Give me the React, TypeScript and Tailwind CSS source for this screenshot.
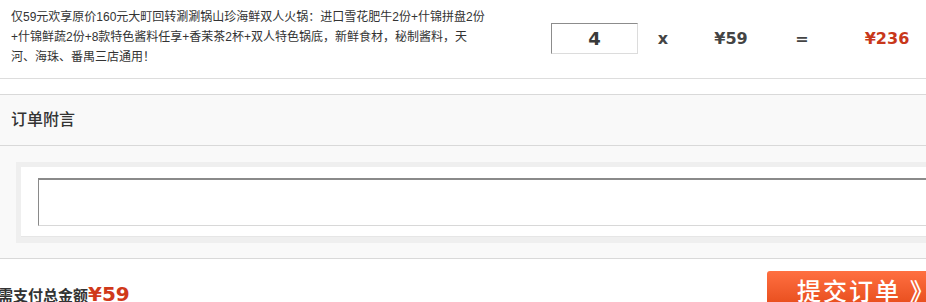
import React from 'react';

const cjk = "font-['Liberation_Sans','Noto_Sans_CJK_SC',sans-serif]";
const num = "font-['DejaVu_Sans','Noto_Sans_CJK_SC',sans-serif]";

const OrderConfirm: React.FC = () => {
  const title =
    '仅59元欢享原价160元大町回转涮涮锅山珍海鲜双人火锅：进口雪花肥牛2份+什锦拼盘2份+什锦鲜蔬2份+8款特色酱料任享+香茉茶2杯+双人特色锅底，新鲜食材，秘制酱料，天河、海珠、番禺三店通用！';

  return (
    <div className={`h-[302px] w-[926px] overflow-hidden bg-white text-[#333] ${cjk}`}>
      <div className="w-[960px]">
        {/* deal row */}
        <div className="flex h-[79px] items-start border-b border-[#dddddd]">
          <p className="ml-[11px] mt-[7px] w-[480px] text-[12px] leading-[20px] text-[#333]">{title}</p>
          <div className={`mt-[23px] flex items-center text-[16px] font-bold text-[#444] ${num}`}>
            <div className="ml-[60px] flex h-[31px] w-[87px] items-center justify-center border border-[#dcdcdc] border-l-[#8c8c8c] border-t-[#8c8c8c] text-[18px] text-[#3a3a3a]">
              4
            </div>
            <div className="w-[50px] text-center">x</div>
            <div className="w-[86px] text-center">¥59</div>
            <div className="w-[56px] text-center">=</div>
            <div className="w-[114px] text-center text-[#c8371a]">¥236</div>
          </div>
        </div>

        {/* note section */}
        <div className="mt-[15px] border-t border-[#d9d9d9] bg-[#f9f9f9]">
          <div className="flex h-[51px] items-center border-b border-[#d9d9d9] pl-[11px] text-[16px] font-medium text-[#333]">
            订单附言
          </div>
          <div className="border-b border-[#d9d9d9] pb-[15px] pl-[16px] pt-[16px]">
            <div className="bg-[#efefef] pb-[6px] pl-[5px] pt-[5px]">
              <div className="border-b border-[#e6e6e6] bg-white pb-[10px] pl-[17px] pt-[11px]">
                <textarea className="block h-[48px] w-full resize-none border border-[#d8d8d8] border-l-[#8a8a8a] border-t-2 border-t-[#8a8a8a] bg-white outline-none" />
              </div>
            </div>
          </div>
        </div>

        {/* total + submit */}
        <div className="flex items-start justify-between">
          <div className="-ml-[2px] mt-[20px] flex items-baseline">
            <span className="text-[15px] font-bold text-[#333]">需支付总金额</span>
            <span className={`text-[20px] font-bold text-[#d0391a] ${num}`}>¥59</span>
          </div>
          <button className="mt-[12px] flex h-[42px] w-[193px] items-center rounded-[3px] bg-gradient-to-b from-[#ff6f40] to-[#e2450f] pl-[30px] text-[24px] font-medium tracking-[2px] text-white">
            提交订单 》
          </button>
        </div>
      </div>
    </div>
  );
};

export default function App() {
  return <OrderConfirm />;
}
